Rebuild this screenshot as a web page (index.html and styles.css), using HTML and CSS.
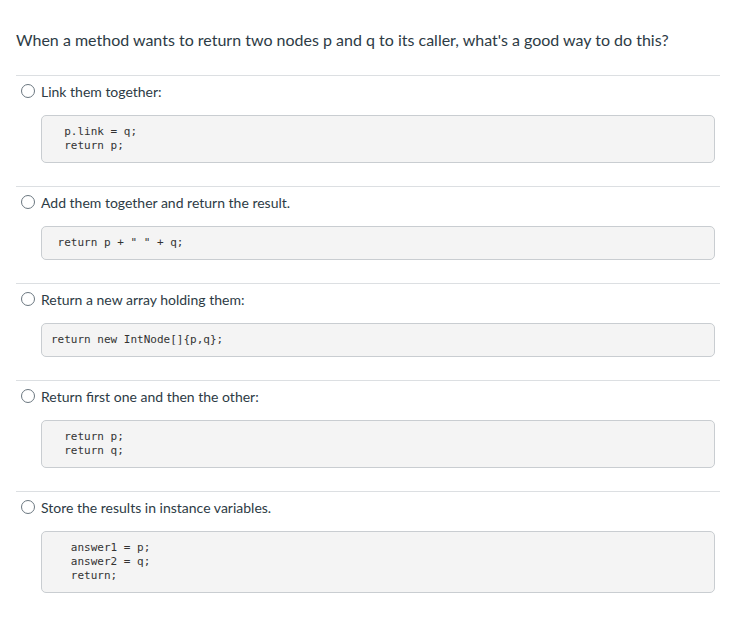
FILE: index.html
```html
<!DOCTYPE html>
<html>
<head>
<meta charset="utf-8">
<link rel="stylesheet" href="styles.css">
</head>
<body>
<div class="quiz">
  <div class="question">When a method wants to return two nodes p and q to its caller, what's a good way to do this?</div>
  <div class="answers">
    <div class="answer">
      <label class="option"><span class="radio"></span><span class="label">Link them together:</span></label>
      <pre class="code">  p.link = q;
  return p;</pre>
    </div>
    <div class="answer">
      <label class="option"><span class="radio"></span><span class="label">Add them together and return the result.</span></label>
      <pre class="code"> return p + " " + q;</pre>
    </div>
    <div class="answer">
      <label class="option"><span class="radio"></span><span class="label">Return a new array holding them:</span></label>
      <pre class="code">return new IntNode[]{p,q};</pre>
    </div>
    <div class="answer">
      <label class="option"><span class="radio"></span><span class="label">Return first one and then the other:</span></label>
      <pre class="code">  return p;
  return q;</pre>
    </div>
    <div class="answer">
      <label class="option"><span class="radio"></span><span class="label">Store the results in instance variables.</span></label>
      <pre class="code">   answer1 = p;
   answer2 = q;
   return;</pre>
    </div>
  </div>
</div>
</body>
</html>
```
FILE: styles.css
```css
html, body {
  margin: 0;
  padding: 0;
  background: #ffffff;
}
body {
  font-family: Lato, "Open Sans", sans-serif;
  color: #2d3b45;
}
.quiz {
  width: 704px;
  padding: 0 13px 0 16px;
}
.question {
  font-size: 16px;
  line-height: 24px;
  padding-top: 28px;
  margin-bottom: 23px;
}
.answer {
  border-top: 1px solid #dcdfe2;
  padding: 5px 0 23px 0;
}
.option {
  display: flex;
  align-items: center;
  height: 20px;
  font-size: 14px;
}
.radio {
  width: 12px;
  height: 12px;
  border: 1px solid #6b7780;
  border-radius: 50%;
  margin-left: 5px;
  margin-right: 6px;
  flex: none;
}
.code {
  margin: 14px 5px 0 25px;
  padding: 9px 9px;
  background: #f4f4f4;
  border: 1px solid #c9cdd1;
  border-radius: 5px;
  font-family: "DejaVu Sans Mono", monospace;
  font-size: 11px;
  line-height: 14px;
  color: #333333;
  white-space: pre;
}
```
